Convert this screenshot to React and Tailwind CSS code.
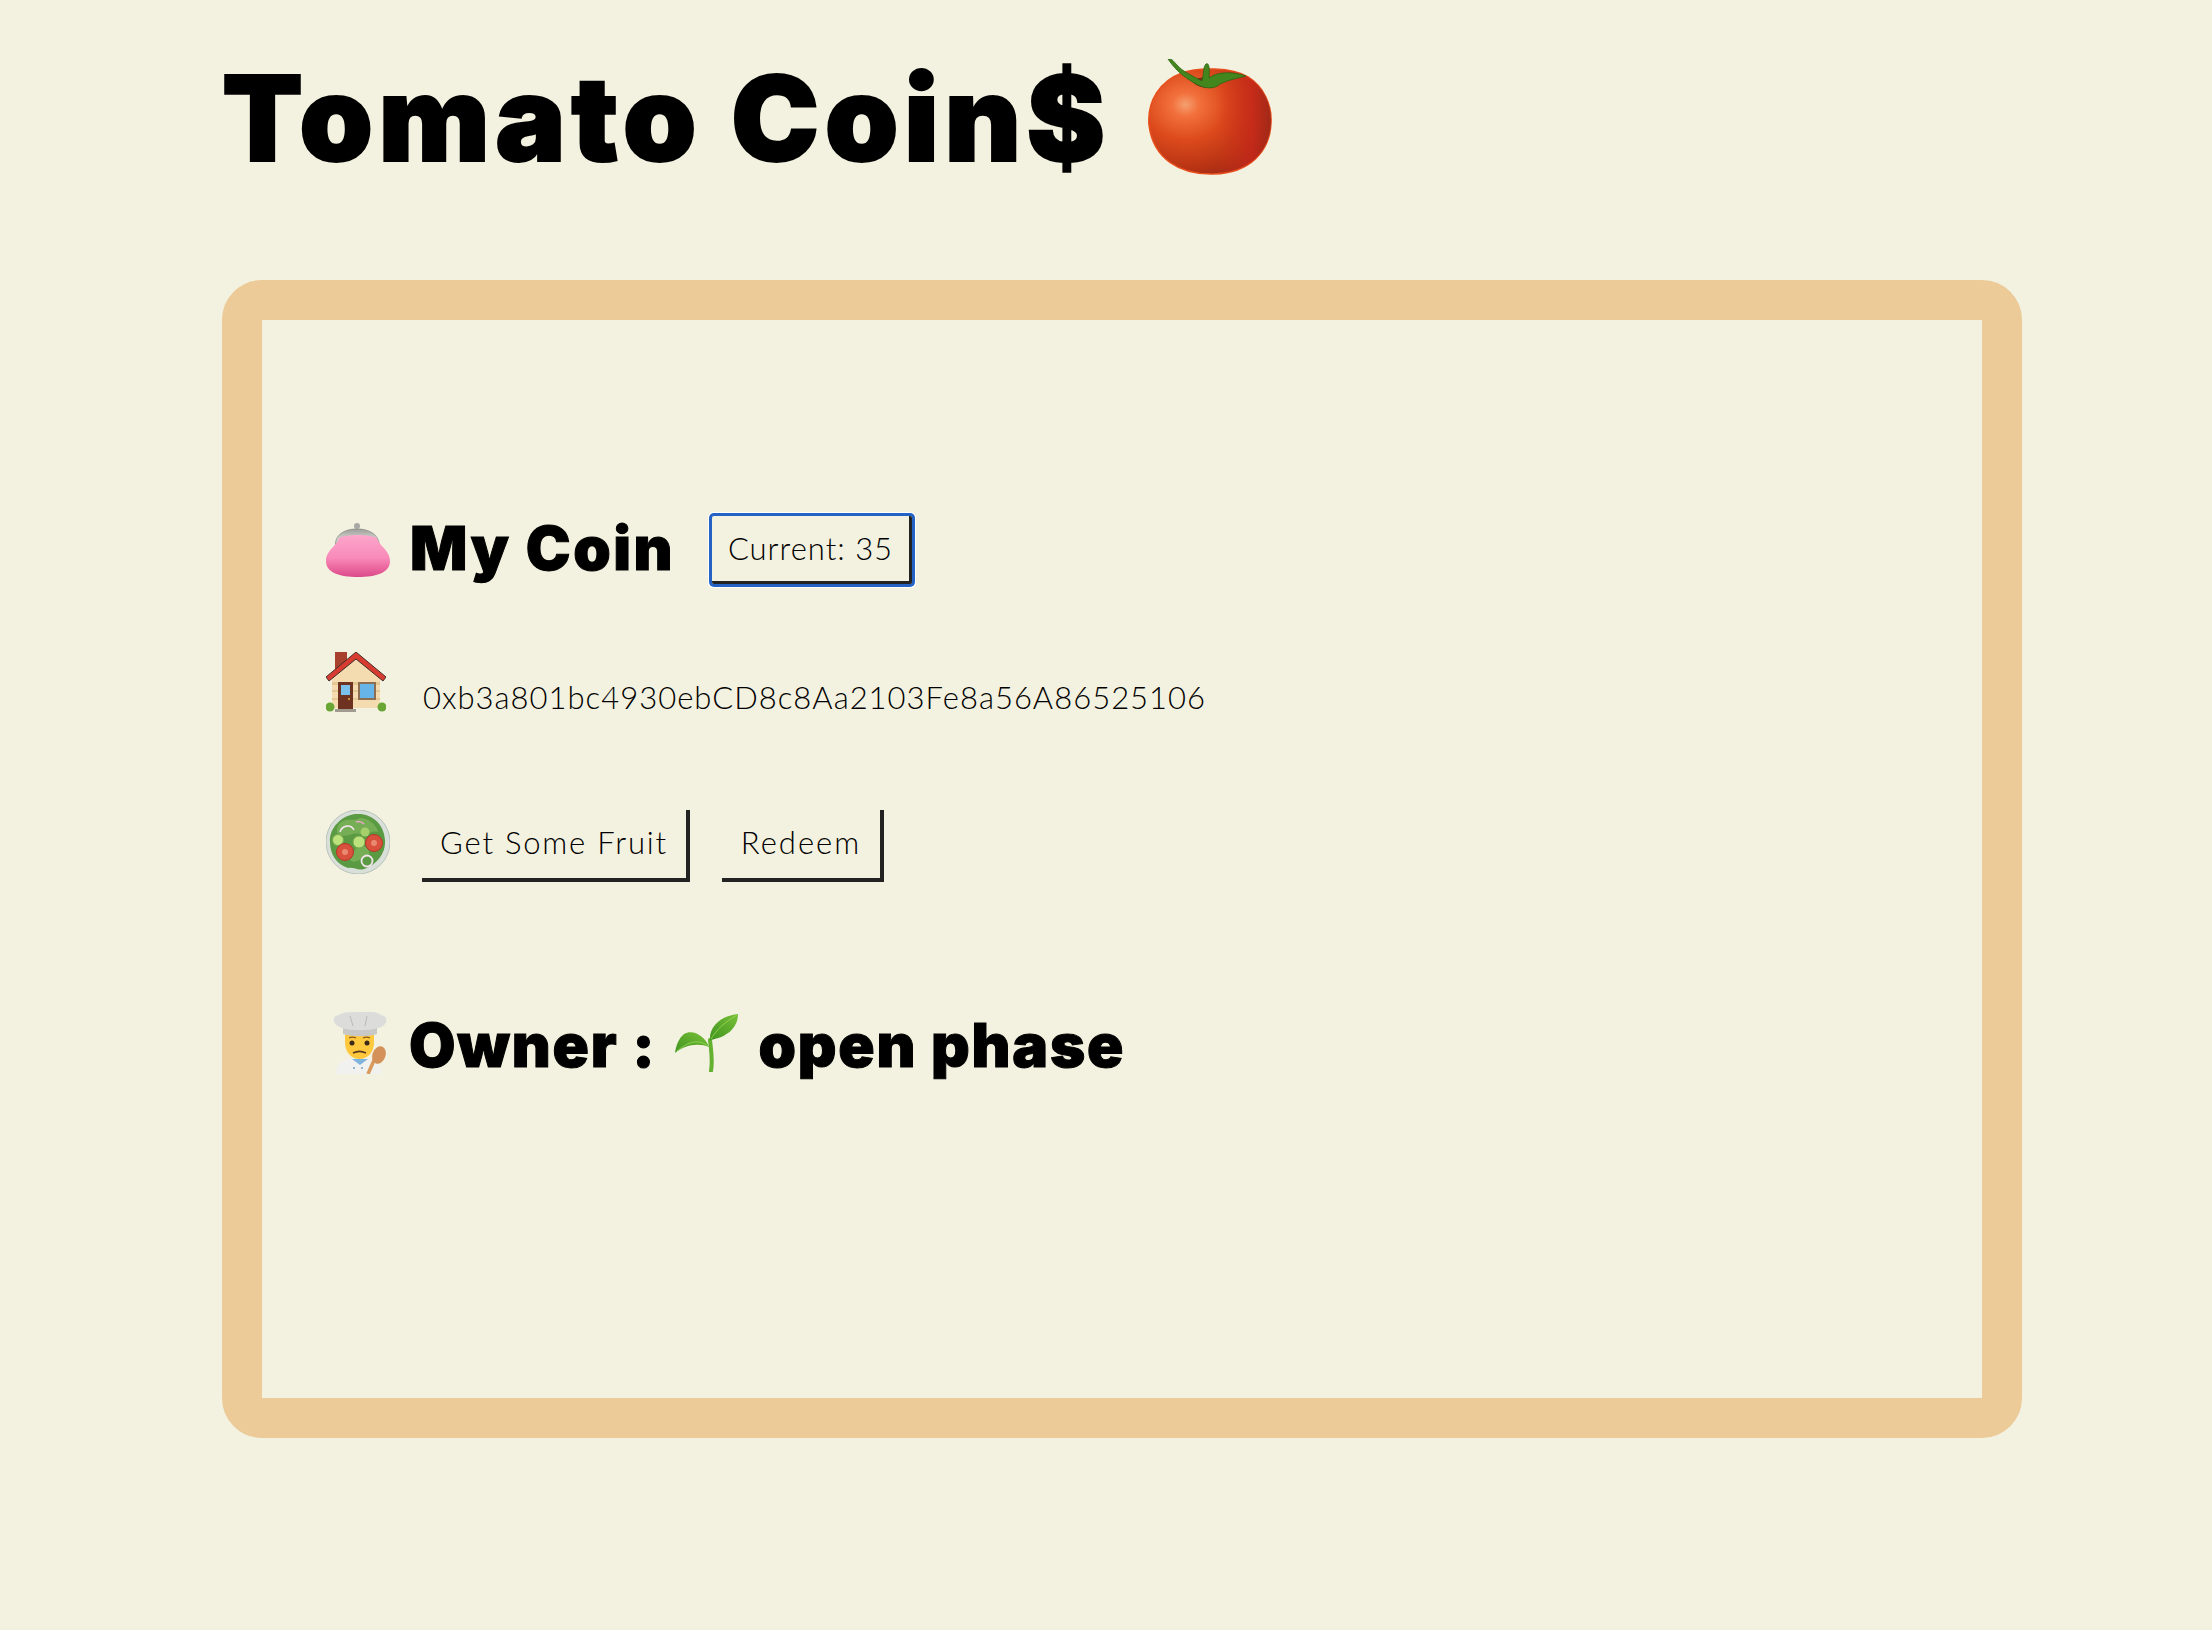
import React from "react";

function Tomato() {
  return (
    <svg width="124" height="116" viewBox="0 0 124 116">
      <defs>
        <radialGradient id="tom" cx="30%" cy="34%" r="80%">
          <stop offset="0" stopColor="#f5a070" />
          <stop offset="0.14" stopColor="#f2703c" />
          <stop offset="0.42" stopColor="#dc4a1c" />
          <stop offset="0.75" stopColor="#b93414" />
          <stop offset="1" stopColor="#962414" />
        </radialGradient>
        <linearGradient id="tomEdge" x1="0" y1="0" x2="1" y2="0">
          <stop offset="0.55" stopColor="#d8341c" stopOpacity="0" />
          <stop offset="0.85" stopColor="#c8281a" stopOpacity="0.8" />
          <stop offset="1" stopColor="#a02818" stopOpacity="0.8" />
        </linearGradient>
      </defs>
      <path d="M34 14C50 8 84 8 100 18C116 28 124 46 123 64C122 92 102 114 66 115C32 116 5 100 1 66C-1 42 12 22 34 14Z" fill="url(#tom)" stroke="#e8501e" strokeWidth="1.5" />
      <path d="M34 14C50 8 84 8 100 18C116 28 124 46 123 64C122 92 102 114 66 115C32 116 5 100 1 66C-1 42 12 22 34 14Z" fill="url(#tomEdge)" />
      <path d="M44 22C50 30 62 30 68 26C64 18 54 16 44 22Z" fill="#7c2a12" />
      <path d="M20 0C24 -1 26 3 29 6C35 13 45 17 54 22C56 14 55 8 58 5C61 3 62 10 61 19C68 13 84 12 98 17C90 19 80 21 72 25C66 31 56 29 50 26C38 20 28 12 20 0Z" fill="#44861e" stroke="#2c6414" strokeWidth="0.8" />
    </svg>
  );
}

function Purse() {
  return (
    <svg width="64" height="54" viewBox="0 0 64 54">
      <defs>
        <linearGradient id="purse" x1="0" y1="0" x2="0" y2="1">
          <stop offset="0" stopColor="#fda6cc" />
          <stop offset="0.55" stopColor="#f88ab8" />
          <stop offset="0.75" stopColor="#ee6ba2" />
          <stop offset="1" stopColor="#d94a8a" />
        </linearGradient>
        <linearGradient id="clasp" x1="0" y1="0" x2="0" y2="1">
          <stop offset="0" stopColor="#9e9e9a" />
          <stop offset="0.5" stopColor="#d2d2ce" />
          <stop offset="1" stopColor="#a8a8a4" />
        </linearGradient>
      </defs>
      <circle cx="31" cy="3" r="3" fill="#a8a8a4" />
      <path d="M10 26C7 14 16 6 31 6C46 6 55 14 53 26Z" fill="url(#clasp)" stroke="#8e8e8a" strokeWidth="0.8" />
      <path d="M13 15C20 11 43 11 51 15C52 22 64 27 64 38C64 50 50 54 32 54C14 54 0 50 0 38C0 27 12 22 13 15Z" fill="url(#purse)" />
    </svg>
  );
}

function House() {
  return (
    <svg width="60" height="60" viewBox="0 0 60 60">
      <rect x="9" y="0" width="12" height="20" fill="#a8402e" />
      <path d="M6 24L30 4L54 24V56H6Z" fill="#f4dcb0" />
      <path d="M6 30H54V33H6ZM6 38H54V40H6ZM6 46H54V48H6Z" fill="#e6c894" />
      <path d="M0 25L30 0L60 25L57 29L30 7L3 29Z" fill="#d83c30" stroke="#43302c" strokeWidth="1" />
      <rect x="12" y="30" width="15" height="27" fill="#6e3220" />
      <rect x="15" y="33" width="9" height="10" fill="#79c0ec" />
      <circle cx="23" cy="47" r="1" fill="#e0b040" />
      <rect x="32" y="30" width="18" height="18" fill="#8e6e52" />
      <rect x="34" y="32" width="14" height="14" fill="#66b4e8" />
      <circle cx="4" cy="55" r="4.5" fill="#6aa636" />
      <circle cx="56" cy="55" r="4.5" fill="#6aa636" />
      <rect x="9" y="57" width="21" height="3" fill="#a09a90" />
    </svg>
  );
}

function Salad() {
  return (
    <svg width="64" height="64" viewBox="0 0 64 64">
      <ellipse cx="32" cy="32" rx="32" ry="32" fill="#d9dfd9" stroke="#b9c2bb" />
      <path d="M30 4C46 3 58 14 59 30C60 44 50 55 38 59C32 61 28 57 22 58C10 54 4 44 4 32C3 18 16 5 30 4Z" fill="#5a9a42" />
      <path d="M14 13C20 7 28 12 34 8C42 8 50 14 52 22C44 20 42 26 34 24C26 22 22 28 12 25C10 20 11 16 14 13Z" fill="#76ae55" />
      <path d="M24 44C32 40 30 34 38 36C44 40 46 46 38 48C32 50 28 54 24 50Z" fill="#76ae55" />
      <circle cx="12" cy="30" r="5.5" fill="#bce27e" stroke="#7aa84c" />
      <circle cx="33" cy="32" r="6" fill="#bce27e" stroke="#7aa84c" />
      <circle cx="39" cy="22" r="4.5" fill="#a6d06c" />
      <circle cx="48" cy="33" r="8.5" fill="#d9503c" stroke="#b7382a" />
      <circle cx="48" cy="33" r="3" fill="#e98a70" />
      <circle cx="19" cy="42" r="8.5" fill="#d9503c" stroke="#b7382a" />
      <circle cx="19" cy="42" r="3" fill="#e98a70" />
      <circle cx="41" cy="51" r="5.5" fill="none" stroke="#f1e3ec" strokeWidth="1.8" />
      <path d="M14 22C16 15 25 14 28 20" fill="none" stroke="#f3e5ee" strokeWidth="1.6" />
      <path d="M30 12C33 11 36 12 38 14" fill="none" stroke="#e8a8c8" strokeWidth="1.6" />
    </svg>
  );
}

function Cook() {
  return (
    <svg width="56" height="62" viewBox="0 0 56 62">
      <path d="M4 62C4 50 12 46 28 46C44 46 48 50 50 62Z" fill="#f1f1ef" />
      <path d="M20 47L28 53L36 47Z" fill="#7fb4df" />
      <circle cx="22" cy="56" r="1" fill="#7f9fbf" />
      <circle cx="30" cy="56" r="1" fill="#7f9fbf" />
      <path d="M13 20H42V30C42 40 36 47 27.5 47C19 47 13 40 13 30Z" fill="#ffc83d" />
      <path d="M11 12H45V22C36 25 20 25 11 22Z" fill="#c8c8c6" />
      <path d="M10 16C0 13 -1 4 7 3C12 -1 20 1 26 0C33 -1 44 -1 49 3C57 4 56 14 46 16C36 19 20 19 10 16Z" fill="#dcdcda" />
      <path d="M18 4L21 14M35 4L33 14" stroke="#b8b8b6" strokeWidth="1" />
      <circle cx="20" cy="31" r="2.5" fill="#3c2a18" />
      <circle cx="35" cy="31" r="2.5" fill="#3c2a18" />
      <path d="M17 26C19 25 22 25 24 26M31 26C33 25 36 25 38 26" fill="none" stroke="#8a5a20" strokeWidth="1.2" />
      <path d="M21 41C25 39 30 39 34 41" fill="none" stroke="#5c3a1e" strokeWidth="1.6" />
      <path d="M36 62L43 46" stroke="#d89a5e" strokeWidth="3.5" />
      <ellipse cx="47" cy="43" rx="6.5" ry="9" fill="#d4925a" transform="rotate(20 47 43)" />
    </svg>
  );
}

function Seedling() {
  return (
    <svg width="64" height="58" viewBox="0 0 64 58">
      <defs>
        <linearGradient id="leaf" x1="0" y1="1" x2="1" y2="0">
          <stop offset="0" stopColor="#3f9420" />
          <stop offset="1" stopColor="#79c038" />
        </linearGradient>
      </defs>
      <path d="M36 57C38 46 36 36 35 26" fill="none" stroke="#64b030" strokeWidth="4" strokeLinecap="round" />
      <path d="M34 33C30 22 18 15 9 20C4 24 1 31 0 39C8 32 22 28 34 33Z" fill="url(#leaf)" />
      <path d="M35 26C34 12 46 2 63 0C63 12 54 23 35 26Z" fill="url(#leaf)" />
      <path d="M36 25C42 15 50 8 62 1M33 32C24 25 14 27 2 37" fill="none" stroke="#9ad858" strokeWidth="0.8" />
    </svg>
  );
}

export default function App() {
  return (
    <div className="min-h-[1630px] bg-[#f3f1df] pl-[222px] text-black font-['Lato',sans-serif]">
      <div className="flex h-[280px] items-start pt-[58px]">
        <h1 className="text-[118px] leading-[120px] font-black tracking-[5.5px] [-webkit-text-stroke:2px_black] font-['Inter',sans-serif]">Tomato Coin$</h1>
        <span className="ml-[37px] mt-[1px]"><Tomato /></span>
      </div>

      <div className="flex h-[1158px] w-[1800px] flex-col rounded-[40px] border-[40px] border-[#eccb98] pl-[64px]">
        <div className="mt-[192px] flex h-[76px] items-center">
          <Purse />
          <h2 className="mb-[4px] ml-[20px] w-[298px] text-[60px] font-black tracking-[2.5px] [-webkit-text-stroke:1px_black] font-['Inter',sans-serif]">My Coin</h2>
          <button className="ml-[4px] h-[68px] w-[200px] rounded-[2px] border-r-[3px] border-b-[3px] border-[#222] text-[31px] font-light tracking-[1px] shadow-[0_0_0_3px_#2462c4,0_0_0_4px_#ffffff]">Current: 35</button>
        </div>

        <div className="mt-[64px] flex h-[60px] items-end">
          <House />
          <span className="ml-[37px] text-[31px] leading-[30px] font-light tracking-[1px]">0xb3a801bc4930ebCD8c8Aa2103Fe8a56A86525106</span>
        </div>

        <div className="mt-[98px] flex h-[72px] items-start">
          <Salad />
          <button className="ml-[32px] h-[72px] w-[268px] border-r-4 border-b-4 border-[#222] pb-1 text-[31px] font-light tracking-[1.8px]">Get Some Fruit</button>
          <button className="ml-[32px] h-[72px] w-[162px] border-r-4 border-b-4 border-[#222] pb-1 text-[31px] font-light tracking-[2px]">Redeem</button>
        </div>

        <div className="mt-[130px] flex h-[62px] items-center text-[60px] font-black tracking-[1.8px] [-webkit-text-stroke:1px_black] font-['Inter',sans-serif]">
          <span className="ml-[6px]"><Cook /></span>
          <span className="ml-[21px] mt-[4px]">Owner :</span>
          <span className="ml-[19px]"><Seedling /></span>
          <span className="ml-[19px] mt-[4px]">open phase</span>
        </div>
      </div>
    </div>
  );
}
